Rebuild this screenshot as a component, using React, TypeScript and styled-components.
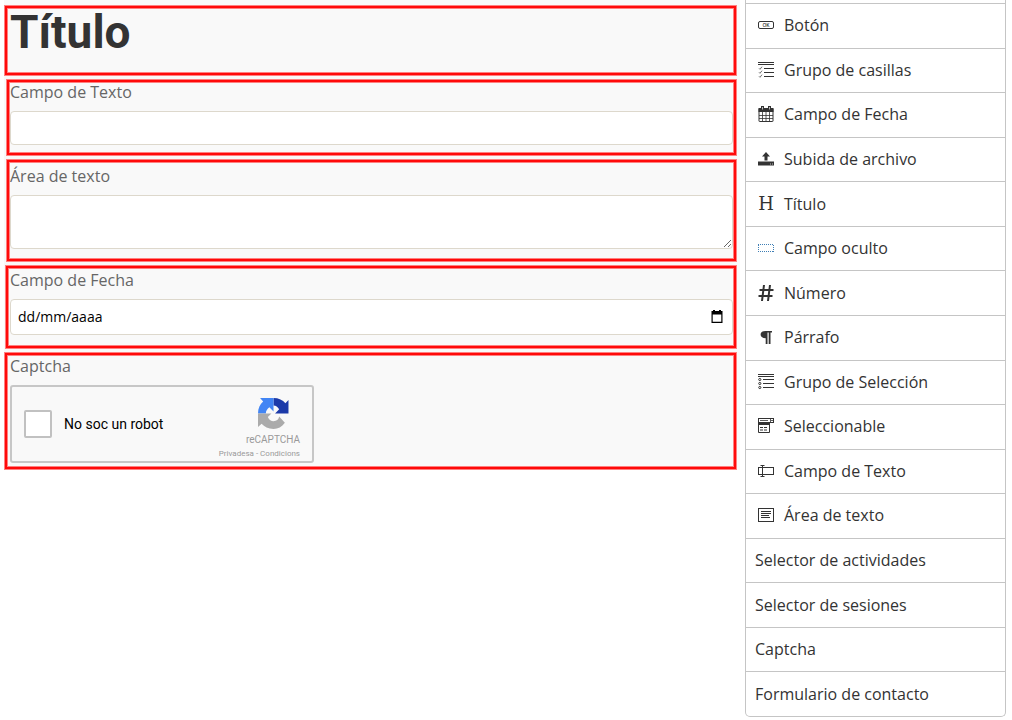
import React from "react";
import styled, { createGlobalStyle } from "styled-components";

const GlobalStyle = createGlobalStyle`
  * { box-sizing: border-box; }
  body {
    margin: 0;
    background: #fff;
    color: #333;
    font-family: "Open Sans", "Noto Sans", sans-serif;
    font-size: 16px;
  }
`;

const Page = styled.div`
  display: grid;
  grid-template-columns: minmax(0, 1fr) 261px;
  column-gap: 5px;
  align-items: start;
  min-height: 100vh;
  padding: 0 6px 0 4px;
`;

const Form = styled.form`
  display: flex;
  flex-direction: column;
  gap: 3px;
  padding: 5px 3px 0 0;
  background: #f9f9f9;
`;

const Block = styled.div<{ $left?: number; $top?: number; $bottom: number }>`
  display: flex;
  flex-direction: column;
  align-items: flex-start;
  margin-left: ${(p) => p.$left ?? 0}px;
  padding: ${(p) => p.$top ?? 0}px 3px ${(p) => p.$bottom}px ${(p) => 5 - (p.$left ?? 0)}px;
  border: 1px solid #ff8080;
  box-shadow: inset 0 0 0 2px #ff0a0a, inset 0 0 0 3px #ff8080;
`;

const Title = styled.h1`
  margin: 0;
  font-family: Roboto, "Open Sans", sans-serif;
  font-size: 46px;
  line-height: 52px;
  font-weight: 700;
`;

const Label = styled.label`
  line-height: 24px;
  margin-bottom: 7px;
  color: #666;
`;

const TextInput = styled.input`
  width: 100%;
  height: 34px;
  padding: 0 8px;
  border: 1px solid #ddd8cc;
  border-radius: 4px;
  background: #fff;
  font: inherit;
`;

const TextArea = styled.textarea`
  display: block;
  width: 100%;
  height: 54px;
  padding: 6px 8px;
  border: 1px solid #ddd8cc;
  border-radius: 4px;
  background: #fff;
  font: inherit;
  resize: both;
`;

const DateBox = styled.div`
  display: flex;
  align-items: center;
  width: 100%;
  height: 36px;
  padding: 0 8px 0 7px;
  border: 1px solid #ddd8cc;
  border-radius: 4px;
  background: #fff;
`;

const DateInput = styled.input`
  flex: 1;
  min-width: 0;
  padding: 0 0 2px;
  border: 0;
  background: none;
  font: 14px "Open Sans", "Noto Sans", sans-serif;
  &::placeholder { color: #000; opacity: 1; }
`;

const DateButton = styled.button`
  display: flex;
  padding: 0;
  border: 0;
  background: none;
  color: #000;
`;

const CaptchaBox = styled.div`
  display: flex;
  align-items: center;
  width: 304px;
  height: 78px;
  padding: 0 12px;
  border: 2px solid #c7c7c7;
  border-radius: 3px;
  background: #f9f9f9;
  font-family: Roboto, sans-serif;
`;

const RobotCheck = styled.input`
  appearance: none;
  width: 28px;
  height: 28px;
  margin: 0 12px 0 0;
  border: 2px solid #c1c1c1;
  border-radius: 2px;
  background: #fff;
`;

const RobotLabel = styled.label`
  flex: 1;
  color: #000;
  font-size: 14px;
`;

const Brand = styled.div`
  display: flex;
  flex-direction: column;
  align-items: flex-end;
  padding-top: 8px;
  color: #999;
`;

const BrandLogo = styled.svg`
  margin: 2px 11px 4px 0;
`;

const BrandName = styled.span`
  font-size: 10px;
  line-height: 14px;
`;

const Legal = styled.span`
  font-size: 8px;
  line-height: 14px;
  a { color: inherit; text-decoration: none; }
`;

const Palette = styled.ul`
  display: grid;
  grid-auto-rows: 1fr;
  min-height: calc(100vh - 3px);
  margin: 0;
  padding: 3px 0 0;
  list-style: none;
  border: 1px solid #c5c5c5;
  border-top: 0;
  border-radius: 0 0 5px 5px;
`;

const PaletteItem = styled.li`
  display: flex;
  border-top: 1px solid #c5c5c5;
`;

const PaletteButton = styled.button`
  display: flex;
  flex: 1;
  align-items: center;
  gap: 10px;
  padding: 8px 9px 9px;
  border: 0;
  background: none;
  color: #333;
  font: inherit;
  text-align: left;
`;

const IconSlot = styled.span`
  display: flex;
  justify-content: center;
  width: 16px;
  margin-left: 3px;
  line-height: 24px;
`;

const SerifGlyph = styled.span`
  font-family: "DejaVu Serif", "Liberation Serif", serif;
  font-size: 18px;
`;

const Svg = ({ children }: { children: React.ReactNode }) => (
  <svg width="16" height="16" viewBox="0 0 16 16" fill="none" stroke="#333" aria-hidden="true">
    {children}
  </svg>
);

const icons = {
  button: (
    <Svg>
      <rect x=".5" y="4.5" width="15" height="7" rx="1.5" />
      <text x="8" y="10" textAnchor="middle" fontSize="5" fontWeight="600" fontFamily="Open Sans, sans-serif" fill="#333" stroke="none">OK</text>
    </Svg>
  ),
  checks: (
    <Svg>
      <path d="M0 .5h16M0 2.500h16M6 6.500h10M6 10.500h10M6 14.500h10" />
      <path d="M1 6.300l1 1 2-2.600M1 10.300l1 1 2-2.600M1 14.300l1 1 2-2.600" strokeWidth=".7" />
    </Svg>
  ),
  calendar: (
    <Svg>
      <path d="M.5 2h15v4H.5z" fill="#333" stroke="none" />
      <rect x="1" y="2.500" width="14" height="13" rx=".5" />
      <path d="M1 9.500h14M1 12.500h14M4.500 6v9M8 6v9M11.500 6v9" strokeWidth=".8" />
      <path d="M4.500 0v4M11.500 0v4" strokeWidth="3" />
      <path d="M4.500 1v2.500M11.500 1v2.500" stroke="#bbb" strokeWidth="1" />
    </Svg>
  ),
  upload: (
    <Svg>
      <path d="M8 1l4 4.400H9.500V9.500h-3V5.400H4z" fill="#333" stroke="none" />
      <path d="M0 10.500h16v4H0z" fill="#333" stroke="none" />
      <path d="M12 13h1M14 13h1" stroke="#fff" strokeWidth=".7" />
    </Svg>
  ),
  heading: <SerifGlyph>H</SerifGlyph>,
  hidden: (
    <Svg>
      <path d="M0 4.500h16M0 11.500h16M.5 5v7M15.500 5v7" stroke="#3f7fb5" strokeDasharray="1 1" />
    </Svg>
  ),
  number: (
    <Svg>
      <path d="M6 0L4 16M12 0l-2 16M1.500 5H15.500M.5 11H14.500" strokeWidth="2" />
    </Svg>
  ),
  paragraph: (
    <Svg>
      <path d="M14 2v1.600h-1.500V15h-1.800V3.600H9.500V15H7.700V9.200C4.500 9.200 2.600 8 2.600 5.600S4.500 2 7.500 2z" fill="#333" stroke="none" />
    </Svg>
  ),
  radios: (
    <Svg>
      <path d="M0 .5h16M0 2.500h16M5 5.500h11M5 9.500h11M5 13.500h11" />
      <circle cx="1.800" cy="5.500" r="1.100" />
      <circle cx="1.800" cy="9.500" r="1.100" />
      <circle cx="1.800" cy="13.500" r="1.100" />
    </Svg>
  ),
  select: (
    <Svg>
      <rect x=".5" y=".5" width="15" height="4" />
      <path d="M12.500 .5v4M2 2.500h8M13 2l1 1 1-1" strokeWidth=".8" />
      <path d="M.5 4.500v10h11v-10" />
      <path d="M1 5h10v2H1z" fill="#333" stroke="none" />
      <path d="M2 9.500h8M2 12h8" strokeDasharray="3 1" />
    </Svg>
  ),
  text: (
    <Svg>
      <rect x=".5" y="4.500" width="15" height="7" />
      <path d="M4.500 2.500v11M2.500 2.500h4M2.500 13.500h4" />
    </Svg>
  ),
  area: (
    <Svg>
      <rect x=".5" y="1.500" width="15" height="13" />
      <path d="M3 4.500h10M3 6.500h10M3 8.500h8M3 10.500h9" />
    </Svg>
  ),
};

const items: { label: string; icon?: keyof typeof icons }[] = [
  { label: "Botón", icon: "button" },
  { label: "Grupo de casillas", icon: "checks" },
  { label: "Campo de Fecha", icon: "calendar" },
  { label: "Subida de archivo", icon: "upload" },
  { label: "Título", icon: "heading" },
  { label: "Campo oculto", icon: "hidden" },
  { label: "Número", icon: "number" },
  { label: "Párrafo", icon: "paragraph" },
  { label: "Grupo de Selección", icon: "radios" },
  { label: "Seleccionable", icon: "select" },
  { label: "Campo de Texto", icon: "text" },
  { label: "Área de texto", icon: "area" },
  { label: "Selector de actividades" },
  { label: "Selector de sesiones" },
  { label: "Captcha" },
  { label: "Formulario de contacto" },
];

export default function App() {
  return (
    <Page>
      <GlobalStyle />
      <Form>
        <Block $bottom={17}>
          <Title>Título</Title>
        </Block>
        <Block $left={2} $bottom={10}>
          <Label htmlFor="texto">Campo de Texto</Label>
          <TextInput id="texto" type="text" />
        </Block>
        <Block $left={2} $top={4} $bottom={12}>
          <Label htmlFor="area">Área de texto</Label>
          <TextArea id="area" />
        </Block>
        <Block $left={1} $top={2} $bottom={13}>
          <Label htmlFor="fecha">Campo de Fecha</Label>
          <DateBox>
            <DateInput id="fecha" type="text" placeholder="dd/mm/aaaa" />
            <DateButton type="button" aria-label="Abrir calendario">
              <svg width="14" height="14" viewBox="0 0 14 14" aria-hidden="true">
                <path d="M3 0h2v1h4V0h2v1h1.500v12h-11V1H3zM2.700 4.500v7.300h8.600V4.500z" fill="currentColor" fillRule="evenodd" />
              </svg>
            </DateButton>
          </DateBox>
        </Block>
        <Block $top={1} $bottom={6}>
          <Label htmlFor="robot">Captcha</Label>
          <CaptchaBox>
            <RobotCheck id="robot" type="checkbox" />
            <RobotLabel htmlFor="robot">No soc un robot</RobotLabel>
            <Brand>
              <BrandLogo width="31" height="31" viewBox="0 0 30 30" aria-hidden="true">
                <path d="M15 0C20 0 24 2 26.500 5L29.500 2V15H16.500L20.500 11C19 8.500 17.500 7.500 15 7.300Z" fill="#1c3aa9" />
                <path d="M15 0V13L11 9C9 10.500 7.600 12.500 7.600 15H0C0 10 2 6 5 3.500L2 0Z" fill="#4285f4" />
                <path d="M0 15H13L9.500 18.500C10.800 21.500 12.800 22.500 15 22.500C18 22.500 20 21 20.500 18L26 24C23 28 19.500 30 15 30C10 30 6 28 3.500 25L0 28Z" fill="#ababab" />
              </BrandLogo>
              <BrandName>reCAPTCHA</BrandName>
              <Legal>
                <a href="#privadesa">Privadesa</a> - <a href="#condicions">Condicions</a>
              </Legal>
            </Brand>
          </CaptchaBox>
        </Block>
      </Form>
      <Palette>
        {items.map(({ label, icon }) => (
          <PaletteItem key={label}>
            <PaletteButton type="button">
              {icon && <IconSlot aria-hidden="true">{icons[icon]}</IconSlot>}
              {label}
            </PaletteButton>
          </PaletteItem>
        ))}
      </Palette>
    </Page>
  );
}
